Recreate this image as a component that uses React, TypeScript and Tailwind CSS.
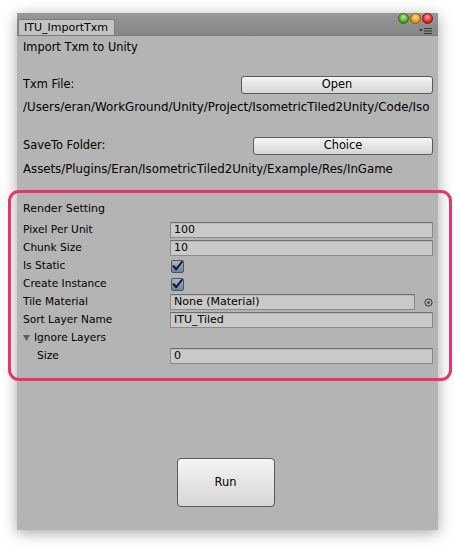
import React from "react";

const font = { fontFamily: '"DejaVu Sans", "Liberation Sans", sans-serif' };

function Field({ value, width = "flex-1" }: { value: string; width?: string }) {
  return (
    <div
      className={`${width} h-[16px] bg-[#c9c9c9] border border-[#8a8a8a] border-t-[#6e6e6e] rounded-[1px] flex items-center pl-[3px] text-[11px] text-black shadow-[inset_0_1px_0_rgba(0,0,0,0.08)]`}
    >
      {value}
    </div>
  );
}

function Check() {
  return (
    <div className="w-[13px] h-[13px] rounded-[2px] border border-[#4a5566] bg-gradient-to-b from-[#a9b8cc] to-[#6f819b] flex items-center justify-center">
      <svg width="11" height="10" viewBox="0 0 11 10">
        <path d="M1.5 5.2 L4.3 8.2 L9.8 1" fill="none" stroke="#0e1a2b" strokeWidth="2" strokeLinecap="round" strokeLinejoin="round" />
      </svg>
    </div>
  );
}

function PropRow({ label, indent, children }: { label: React.ReactNode; indent?: boolean; children?: React.ReactNode }) {
  return (
    <div className="h-[18px] flex items-center">
      <div className={`w-[147px] shrink-0 text-[10.6px] text-black whitespace-nowrap ${indent ? "pl-[14px]" : ""}`}>{label}</div>
      <div className="flex-1 flex items-center">{children}</div>
    </div>
  );
}

function UnityButton({ label, className }: { label: string; className: string }) {
  return (
    <div
      className={`${className} border border-[#5b5b5b] rounded-[3px] bg-gradient-to-b from-[#f4f4f4] to-[#d6d6d6] flex items-center justify-center text-black`}
    >
      {label}
    </div>
  );
}

export default function App() {
  return (
    <div className="w-[455px] h-[551px] bg-white pt-[13px] pl-[17px]" style={font}>
      <div className="relative w-[421px] h-[517px] bg-[#b4b4b4] shadow-[0_3px_14px_rgba(0,0,0,0.35)] flex flex-col">
        {/* title bar */}
        <div className="relative h-[23px] bg-gradient-to-b from-[#989898] to-[#858585] border-b border-[#7a7a7a] flex items-end pl-[1px]">
          <div className="w-[97px] h-[16px] bg-[#c3c3c3] border border-[#7c7c7c] border-b-0 rounded-t-[2px] whitespace-nowrap pl-[5px] text-[11px] leading-[15px] text-black">
            ITU_ImportTxm
          </div>
          <div className="absolute right-[5px] top-[0px] flex gap-[1px]">
            <span className="w-[11px] h-[11px] rounded-full bg-[radial-gradient(circle_at_50%_35%,#b8f08a,#3c9a1c_70%)] border border-[#2d6a17]" />
            <span className="w-[11px] h-[11px] rounded-full bg-[radial-gradient(circle_at_50%_35%,#ffe08a,#e08a12_70%)] border border-[#9a5a0a]" />
            <span className="w-[11px] h-[11px] rounded-full bg-[radial-gradient(circle_at_50%_35%,#ff9a9a,#d51a1a_70%)] border border-[#8a1010]" />
          </div>
          <svg className="absolute right-[5px] top-[15px]" width="14" height="6" viewBox="0 0 14 6">
            <path d="M0 1 H4 L2 3.5 Z" fill="#333" />
            <rect x="5" y="0" width="8" height="1" fill="#333" />
            <rect x="5" y="2.5" width="8" height="1" fill="#333" />
            <rect x="5" y="5" width="8" height="1" fill="#333" />
          </svg>
        </div>

        {/* content */}
        <div className="flex flex-col pl-[6px] pr-[5px] text-[11.4px] text-black">
          <div className="h-[18px] mt-[3px] flex items-center">Import Txm to Unity</div>

          <div className="h-[18px] mt-[19px] flex items-center justify-between">
            <span>Txm File:</span>
            <UnityButton label="Open" className="w-[192px] h-[18px] text-[11.4px]" />
          </div>
          <div className="h-[18px] mt-[5px] flex items-center whitespace-nowrap text-[11.85px]">
            /Users/eran/WorkGround/Unity/Project/IsometricTiled2Unity/Code/Iso
          </div>

          <div className="h-[18px] mt-[20px] flex items-center justify-between">
            <span>SaveTo Folder:</span>
            <UnityButton label="Choice" className="w-[180px] h-[18px] text-[11.4px]" />
          </div>
          <div className="h-[18px] mt-[6px] flex items-center whitespace-nowrap text-[11.75px]">
            Assets/Plugins/Eran/IsometricTiled2Unity/Example/Res/InGame
          </div>

          <div className="h-[18px] mt-[21px] flex items-center text-[11px]">Render Setting</div>

          <div className="mt-[3px] flex flex-col">
            <PropRow label="Pixel Per Unit">
              <Field value="100" />
            </PropRow>
            <PropRow label="Chunk Size">
              <Field value="10" />
            </PropRow>
            <PropRow label="Is Static">
              <div className="pl-[1px]"><Check /></div>
            </PropRow>
            <PropRow label="Create Instance">
              <div className="pl-[1px]"><Check /></div>
            </PropRow>
            <PropRow label="Tile Material">
              <Field value="None (Material)" />
              <div className="w-[18px] flex justify-end">
                <svg width="9" height="9" viewBox="0 0 9 9">
                  <circle cx="4.5" cy="4.5" r="3.6" fill="none" stroke="#333" strokeWidth="1" />
                  <circle cx="4.5" cy="4.5" r="1.2" fill="#333" />
                </svg>
              </div>
            </PropRow>
            <PropRow label="Sort Layer Name">
              <Field value="ITU_Tiled" />
            </PropRow>
            <PropRow
              label={
                <span className="flex items-center gap-[4px]">
                  <svg width="7" height="6" viewBox="0 0 7 6">
                    <path d="M0 0 H7 L3.5 6 Z" fill="#5e5e5e" />
                  </svg>
                  Ignore Layers
                </span>
              }
            />
            <PropRow label="Size" indent>
              <Field value="0" />
            </PropRow>
          </div>

          <div className="flex justify-center mt-[93px] pr-[5px]">
            <UnityButton label="Run" className="w-[98px] h-[49px] text-[11.4px] rounded-[4px]" />
          </div>
        </div>

        {/* annotation highlight */}
        <div className="absolute left-[-9px] top-[177px] w-[444px] h-[191px] border-[3px] border-[#e8336b] rounded-[11px] pointer-events-none" />
      </div>
    </div>
  );
}
